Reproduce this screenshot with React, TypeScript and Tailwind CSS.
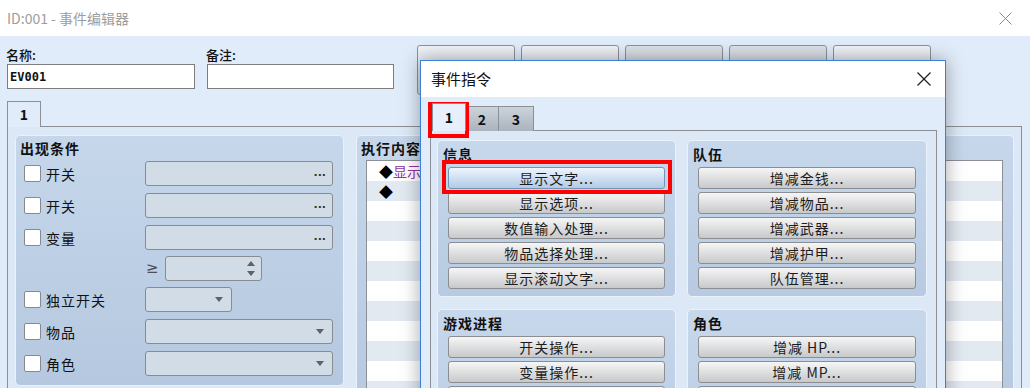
import React from "react";

const FONT = "font-['Noto_Sans_CJK_SC','Noto_Sans',sans-serif]";

function XIcon({ size, stroke, width }: { size: number; stroke: string; width: number }) {
  return (
    <svg width={size} height={size} viewBox={`0 0 ${size} ${size}`}>
      <line x1="0.5" y1="0.5" x2={size - 0.5} y2={size - 0.5} stroke={stroke} strokeWidth={width} />
      <line x1={size - 0.5} y1="0.5" x2="0.5" y2={size - 0.5} stroke={stroke} strokeWidth={width} />
    </svg>
  );
}

function Tri({ up }: { up?: boolean }) {
  return (
    <svg width="8" height="5" viewBox="0 0 8 5">
      <path d={up ? "M0 5 L4 0 L8 5 Z" : "M0 0 L8 0 L4 5 Z"} fill="#5e6166" />
    </svg>
  );
}

function CheckLabel({ label }: { label: string }) {
  return (
    <div className="w-[129px] flex items-center pl-[8px]">
      <div className="w-[17px] h-[17px] bg-white border border-[#858a90] rounded-[2px]" />
      <span className="ml-[5px] text-[14px] leading-[20px] tracking-[1px] text-[#111]">{label}</span>
    </div>
  );
}

const boxCls =
  "h-[25px] border border-[#888c91] rounded-[3px] bg-[#d2dce7] flex items-center justify-end";

function DotsBox() {
  return (
    <div className={`${boxCls} w-[188px] pr-[6px]`}>
      <span className="font-['DejaVu_Sans',sans-serif] text-[11px] font-bold leading-none text-[#333] -mt-[3px]">...</span>
    </div>
  );
}

function DropBox({ w }: { w: string }) {
  return (
    <div className={`${boxCls} ${w} pr-[8px]`}>
      <Tri />
    </div>
  );
}

function CmdButton({ label, selected }: { label: string; selected?: boolean }) {
  return (
    <div
      className={`h-[22px] rounded-[3px] border flex items-center justify-center text-[14px] tracking-[1px] leading-none text-[#1c1c1c] ${
        selected
          ? "border-[#7393b8] bg-linear-to-b from-[#eef5fd] to-[#b2cbe6]"
          : "border-[#8b8d90] bg-linear-to-b from-[#f6f6f6] to-[#c8c9cb]"
      }`}
    >
      {label}
    </div>
  );
}

function CmdGroup({ title, items, sel }: { title: string; items: string[]; sel?: number }) {
  return (
    <div className="h-[157px] rounded-[5px] border border-[#eaf2fb] bg-linear-to-b from-[#c7d8ec] to-[#b7cae1] pt-[3px]">
      <div className="pl-[5px] h-[20px] leading-[20px] text-[14px] font-bold tracking-[1px] text-[#111]">{title}</div>
      <div className="mt-[3px] px-[10px] flex flex-col gap-[3px]">
        {items.map((t, i) => (
          <CmdButton key={i} label={t} selected={sel === i} />
        ))}
      </div>
    </div>
  );
}

export default function App() {
  const rows = Array.from({ length: 12 });
  return (
    <div className={`relative w-[1030px] h-[388px] overflow-hidden bg-[#e1ecfa] ${FONT}`}>
      {/* Title bar */}
      <div className="h-[36px] bg-white flex items-center justify-between pl-[7px] pr-[18px]">
        <span className="text-[14px] text-[#9d9d9d]">ID:001 - 事件编辑器</span>
        <XIcon size={13} stroke="#8a8a8a" width={1} />
      </div>

      {/* Body */}
      <div className="px-[7px] pt-[9px]">
        <div className="flex items-start">
          <div className="w-[188px]">
            <div className="h-[19px] leading-[19px] text-[13px] font-medium text-[#111] -ml-px">名称:</div>
            <div className="h-[25px] bg-white border border-[#7d7d7d] flex items-center pl-[2px] font-['DejaVu_Sans_Mono',monospace] text-[12px] font-bold text-[#111]">
              EV001
            </div>
          </div>
          <div className="w-[187px] ml-[12px]">
            <div className="h-[19px] leading-[19px] text-[13px] font-medium text-[#111] -ml-px">备注:</div>
            <div className="h-[25px] bg-white border border-[#7d7d7d]" />
          </div>
          <div className="ml-[23px] flex gap-[6px]">
            {[0, 1, 2, 3, 4].map((i) => (
              <div
                key={i}
                className={`w-[98px] h-[50px] rounded-[3px] border border-[#8e9298] bg-linear-to-b ${
                  i === 2 || i === 3 ? "from-[#dde2e8] to-[#c2cad4]" : "from-[#f0f3f7] to-[#d3d9e1]"
                }`}
              />
            ))}
          </div>
        </div>

        {/* Tabs */}
        <div className="mt-[6px] flex">
          <div className="relative z-10 w-[34px] h-[26px] border border-b-0 border-[#8c8f95] bg-[#e1ecfa] flex items-center justify-center text-[14px] font-bold text-[#111]">
            1
          </div>
        </div>

        {/* Panel */}
        <div className="-mt-px w-[1015px] h-[280px] border border-[#8c8f95] bg-[#dde8f6] pl-[7px] pt-[8px] flex gap-[12px]">
          {/* 出现条件 */}
          <div className="w-[329px] h-[251px] rounded-[5px] border border-[#e9f1fb] bg-linear-to-b from-[#c6d7eb] to-[#b5c8df] pt-[2px]">
            <div className="pl-[4px] h-[20px] leading-[20px] text-[14px] font-bold tracking-[1px] text-[#111]">出现条件</div>
            <div className="mt-[3px] flex flex-col">
              <div className="flex items-center h-[25px]">
                <CheckLabel label="开关" />
                <DotsBox />
              </div>
              <div className="mt-[7px] flex items-center h-[25px]">
                <CheckLabel label="开关" />
                <DotsBox />
              </div>
              <div className="mt-[7px] flex items-center h-[25px]">
                <CheckLabel label="变量" />
                <DotsBox />
              </div>
              <div className="mt-[6px] flex items-center h-[25px]">
                <div className="w-[129px]" />
                <span className="w-[20px] pl-[1px] font-['DejaVu_Sans',sans-serif] text-[15px] text-[#4a4f58]">≥</span>
                <div className={`${boxCls} w-[97px] pr-[6px]`}>
                  <div className="flex flex-col gap-[5px]">
                    <Tri up />
                    <Tri />
                  </div>
                </div>
              </div>
              <div className="mt-[6px] flex items-center h-[25px]">
                <CheckLabel label="独立开关" />
                <DropBox w="w-[87px]" />
              </div>
              <div className="mt-[7px] flex items-center h-[25px]">
                <CheckLabel label="物品" />
                <DropBox w="w-[188px]" />
              </div>
              <div className="mt-[7px] flex items-center h-[25px]">
                <CheckLabel label="角色" />
                <DropBox w="w-[188px]" />
              </div>
            </div>
          </div>

          {/* 执行内容 */}
          <div className="w-[658px] h-[300px] rounded-[5px] border border-[#e9f1fb] bg-linear-to-b from-[#c6d7eb] to-[#b5c8df] pt-[2px]">
            <div className="pl-[4px] h-[20px] leading-[20px] text-[14px] font-bold tracking-[1px] text-[#111]">执行内容</div>
            <div className="ml-[9px] mt-[2px] w-[637px] border border-[#8c8f95] bg-white">
              {rows.map((_, i) => (
                <div
                  key={i}
                  className={`h-[20px] flex items-center pl-[12px] text-[14px] leading-none ${
                    i % 2 === 0 ? "bg-white" : "bg-[#e2e9f1]"
                  }`}
                >
                  {i === 0 && (
                    <>
                      <span className="text-black">◆</span>
                      <span className="text-[#92329f]">显示文字：无, 窗口, 下方</span>
                    </>
                  )}
                  {i === 1 && <span className="text-black">◆</span>}
                </div>
              ))}
            </div>
          </div>
        </div>
      </div>

      {/* 事件指令 popup window */}
      <div className="absolute left-[420px] top-[60px] w-[526px] h-[360px] border border-[#3a80d6] bg-[#e1ecfa] shadow-[0_0_18px_rgba(0,0,0,0.35)]">
        <div className="h-[36px] bg-white flex items-center justify-between pl-[10px] pr-[14px]">
          <span className="text-[15px] text-[#111]">事件指令</span>
          <XIcon size={14} stroke="#222" width={1.2} />
        </div>
        <div className="pl-[9px] pt-[6px]">
          <div className="flex items-end h-[28px] pl-[2px]">
            <div className="relative z-10 w-[34px] h-[28px] border border-b-0 border-[#8c8f95] bg-[#e6effb] flex items-center justify-center text-[14px] font-bold text-[#111]">
              1
            </div>
            <div className="-ml-px w-[34px] h-[25px] border border-b-0 border-[#8c8f95] bg-linear-to-b from-[#ccd3da] to-[#aab4be] flex items-center justify-center text-[14px] font-bold text-[#111]">
              2
            </div>
            <div className="-ml-px w-[36px] h-[25px] border border-b-0 border-[#8c8f95] bg-linear-to-b from-[#ccd3da] to-[#aab4be] flex items-center justify-center text-[14px] font-bold text-[#111]">
              3
            </div>
          </div>
          <div className="-mt-px w-[507px] h-[300px] border border-[#8c8f95] bg-[#dce8f6] pl-[6px] pt-[9px]">
            <div className="grid grid-cols-[239px_240px] gap-x-[11px] gap-y-[12px]">
              <CmdGroup
                title="信息"
                sel={0}
                items={["显示文字...", "显示选项...", "数值输入处理...", "物品选择处理...", "显示滚动文字..."]}
              />
              <CmdGroup
                title="队伍"
                items={["增减金钱...", "增减物品...", "增减武器...", "增减护甲...", "队伍管理..."]}
              />
              <CmdGroup
                title="游戏进程"
                items={["开关操作...", "变量操作...", "独立开关操作...", "计时器操作..."]}
              />
              <CmdGroup title="角色" items={["增减 HP...", "增减 MP...", "增减 TP...", "增减经验值..."]} />
            </div>
          </div>
        </div>
      </div>

      {/* Red highlight boxes */}
      <div className="absolute left-[428px] top-[102px] w-[41px] h-[36px] border-[4px] border-[#ff0000]" />
      <div className="absolute left-[442px] top-[160px] w-[230px] h-[34px] border-[4px] border-[#ff0000]" />
    </div>
  );
}
